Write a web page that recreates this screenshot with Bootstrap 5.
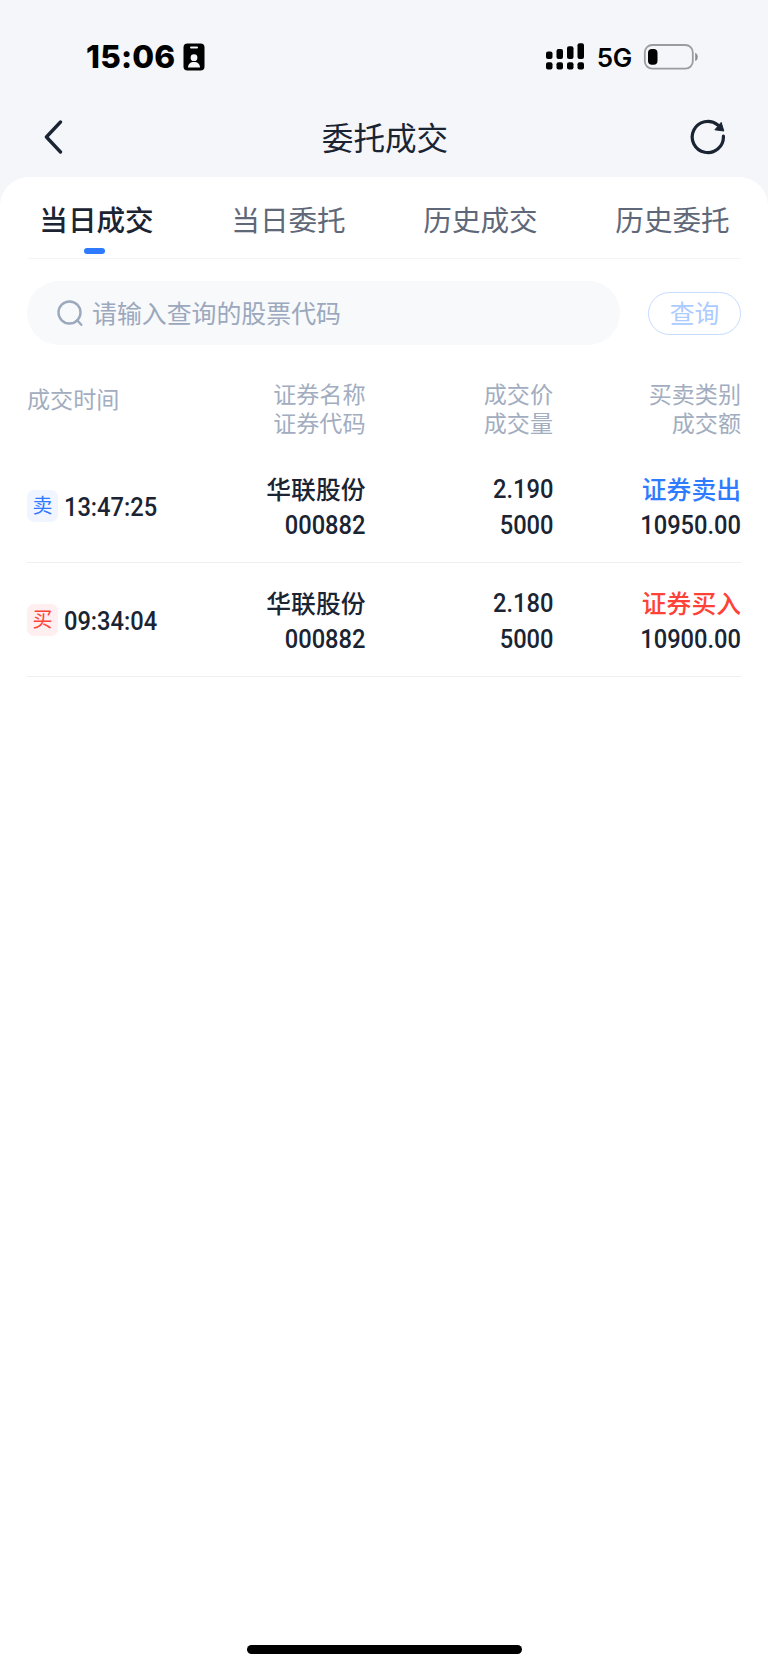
<!DOCTYPE html>
<html lang="zh-CN">
<head>
<meta charset="utf-8">
<meta name="viewport" content="width=device-width, initial-scale=1">
<title>委托成交</title>
<link href="https://cdn.jsdelivr.net/npm/bootstrap@5.3.0/dist/css/bootstrap.min.css" rel="stylesheet">
<style>
  body { font-family: "Noto Sans CJK SC", sans-serif; background: #f4f6fa; color: #1a2433; }
  .screen { height: 1669px; }
  .status-bar { height: 97px; padding: 17px 69px 0 86px; color: #000; font-family: Inter, sans-serif; }
  .clock { font-size: 31.6px; font-weight: 800; line-height: 40px; letter-spacing: .2px; width: 89px; white-space: nowrap; }
  .network { font-size: 26px; font-weight: 600; line-height: 40px; margin: 1px 11px 0 12px; letter-spacing: -.3px; }
  .title-bar { height: 80px; padding: 0 42px 0 44px; }
  .title-bar h1 { font-size: 31.6px; line-height: 40px; font-weight: 400; padding: 0 0 2px 16px; }
  .sheet { background: #fff; border-radius: 29px 29px 0 0; }
  .tabs { height: 81px; }
  .tabs .nav-link { font-size: 28.6px; line-height: 40px; padding: 22px 0 0 1px; color: #5e6879; }
  .tabs .nav-link.active { color: #1a2433; font-weight: 500; }
  .tabs .nav-link.active::after { content: ""; display: block; width: 21px; height: 6px; margin: 9px auto 0; border-radius: 3px; background: #2f7bff; position: relative; left: -2px; }
  .rule { height: 1px; margin: 0 27px 0 28px; background: #f3f4f6; }
  .search { margin: 22px 27px 0; gap: 28px; }
  .search-box { height: 64px; border-radius: 32px; background: #f7f9fb; padding-left: 30px; gap: 9px; color: #9ca8bd; font-size: 24.9px; line-height: 36px; }
  .search-box span { padding-bottom: 2px; }
  .query { width: 93px; height: 43px; border: 1.5px solid #c6dbff; border-radius: 22px; color: #accbff; font-size: 24.8px; line-height: 36px; padding: 0 0 2px; }
  .deal { display: grid; grid-template-columns: 150px 188.5px 187.5px 188px; margin: 0 27px; }
  .deal-head { height: 103.5px; padding-top: 34px; color: #a2adc0; font-size: 23.1px; line-height: 29.3px; }
  .deal-head .first { padding-top: 5px; }
  .deal-row { height: 114.3px; padding-top: 21.5px; font-size: 24.8px; font-weight: 500; line-height: 36px; border-bottom: 1.5px solid #eeeff1; }
  .deal-row > div > span { display: block; height: 36px; }
  .deal-row .num { font-family: Roboto, sans-serif; font-size: 25.2px; font-weight: 500; line-height: 40px; transform: scaleX(.94); transform-origin: right center; }
  .deal-row > .time { width: 130px; height: 72px; }
  .deal-row > .time > .tag { width: 32px; height: 32px; border-radius: 7px; font-size: 20px; font-weight: 400; line-height: 30px; }
  .sell { color: #2f7bff; } .buy { color: #ff4238; }
  .tag.sell { background: #f0f5ff; } .tag.buy { background: #ffeff0; }
  .home-bar { width: 275px; height: 9px; margin: auto auto 15px 247px; border-radius: 5px; background: #000; }
</style>
</head>
<body>
<main class="screen d-flex flex-column overflow-hidden">
  <div class="status-bar d-flex align-items-center">
    <span class="clock">15:06</span>
    <svg class="ms-2" width="22" height="28" viewBox="0 0 22 28"><rect x=".5" y=".5" width="21" height="27" rx="4" fill="#000"/><rect x="7" y="3.5" width="8" height="2" rx="1" fill="#f4f6fa"/><circle cx="11" cy="14.7" r="3.4" fill="#f4f6fa"/><path d="M5 24.5c0-3.6 2.5-5.6 6-5.6s6 2 6 5.6z" fill="#f4f6fa"/></svg>
    <svg class="ms-auto" width="39" height="28" viewBox="0 0 39 28"><g><rect x="0" y="8.5" width="6.5" height="7.5" rx="2"/><rect x="10.5" y="6" width="6.5" height="10" rx="2"/><rect x="21" y="3.2" width="6.5" height="12.8" rx="2"/><rect x="31.5" y=".2" width="6.5" height="15.8" rx="2"/><rect x="0" y="19.3" width="6.5" height="7.2" rx="2"/><rect x="10.5" y="19.3" width="6.5" height="7.2" rx="2"/><rect x="21" y="19.3" width="6.5" height="7.2" rx="2"/><rect x="31.5" y="19.3" width="6.5" height="7.2" rx="2"/></g></svg>
    <span class="network">5G</span>
    <svg width="56" height="26" viewBox="0 0 56 26"><rect x="1.8" y="1" width="48" height="23.7" rx="7.5" fill="none" stroke="#9b9ca0" stroke-width="1.8"/><rect x="5" y="5" width="9.5" height="15.7" rx="4" fill="#000"/><path d="M52.2 8.7c3.4 1.6 3.4 6.8 0 8.4z" fill="#8c8d91"/></svg>
  </div>
  <header class="title-bar d-flex align-items-center justify-content-between">
    <svg width="20" height="34" viewBox="0 0 20 34" fill="none" stroke="#1a2433" stroke-width="3.3" stroke-linecap="round" stroke-linejoin="round"><path d="M16.5 2 2.4 17l14.1 15"/></svg>
    <h1 class="m-0">委托成交</h1>
    <svg width="36" height="36" viewBox="0 0 36 36"><path d="M33.4 17.2A15.6 15.6 0 1 1 27.8 6" fill="none" stroke="#1a2433" stroke-width="3.2" stroke-linecap="round"/><path d="m31.2 3.4 2.6 8.6-8.9-1.2z" fill="#1a2433" stroke="#1a2433" stroke-linejoin="round"/></svg>
  </header>
  <section class="sheet flex-grow-1 d-flex flex-column">
    <nav class="tabs nav nav-justified align-items-start flex-nowrap">
      <a class="nav-link active" href="#">当日成交</a>
      <a class="nav-link" href="#">当日委托</a>
      <a class="nav-link" href="#">历史成交</a>
      <a class="nav-link" href="#">历史委托</a>
    </nav>
    <div class="rule"></div>
    <div class="search d-flex align-items-center">
      <div class="search-box flex-grow-1 d-flex align-items-center">
        <svg width="26" height="27" viewBox="0 0 26 27" fill="none" stroke="#9ca8bd" stroke-width="2.4" stroke-linecap="round"><circle cx="12.5" cy="12.5" r="11"/><path d="m20.2 20.2 4.1 4.6"/></svg>
        <span>请输入查询的股票代码</span>
      </div>
      <button class="query btn">查询</button>
    </div>
    <div class="deal deal-head text-end">
      <div class="first text-start">成交时间</div>
      <div>证券名称<br>证券代码</div>
      <div>成交价<br>成交量</div>
      <div>买卖类别<br>成交额</div>
    </div>
    <div class="deal deal-row text-end">
      <div class="time d-flex align-items-center justify-content-between"><span class="tag sell text-center">卖</span><span class="num">13:47:25</span></div>
      <div><span>华联股份</span><span class="num">000882</span></div>
      <div><span class="num">2.190</span><span class="num">5000</span></div>
      <div><span class="sell">证券卖出</span><span class="num">10950.00</span></div>
    </div>
    <div class="deal deal-row text-end">
      <div class="time d-flex align-items-center justify-content-between"><span class="tag buy text-center">买</span><span class="num">09:34:04</span></div>
      <div><span>华联股份</span><span class="num">000882</span></div>
      <div><span class="num">2.180</span><span class="num">5000</span></div>
      <div><span class="buy">证券买入</span><span class="num">10900.00</span></div>
    </div>
    <div class="home-bar"></div>
  </section>
</main>
<script src="https://cdn.jsdelivr.net/npm/bootstrap@5.3.0/dist/js/bootstrap.bundle.min.js"></script>
</body>
</html>
